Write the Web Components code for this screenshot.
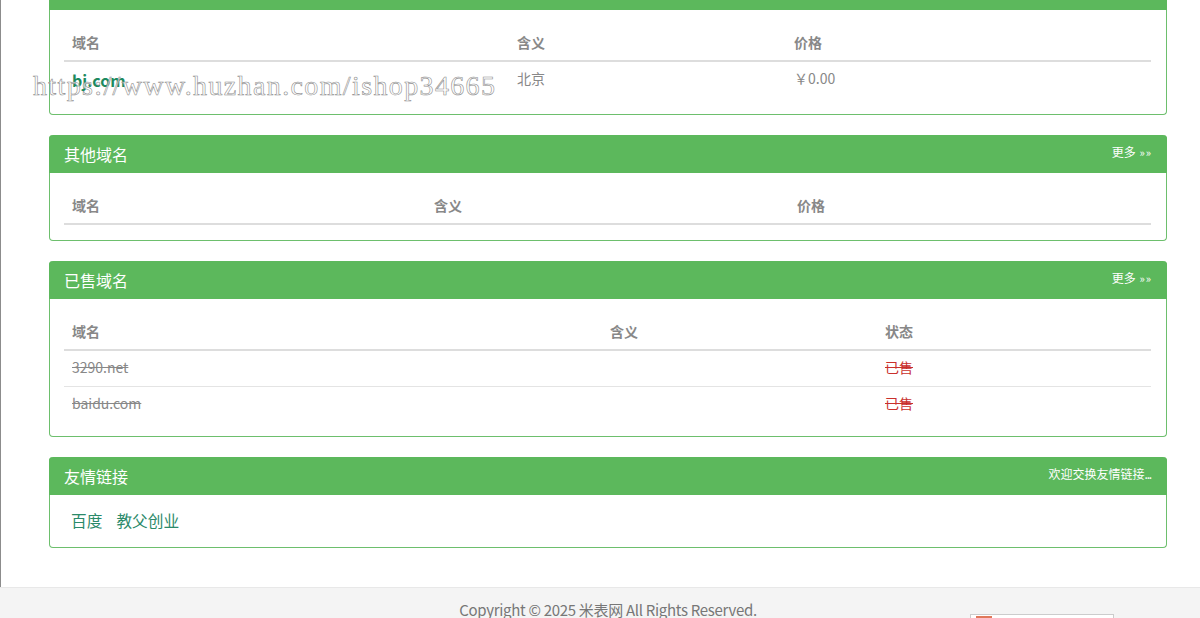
<!DOCTYPE html>
<html lang="zh">
<head>
<meta charset="utf-8">
<title>米表网</title>
<style>
  html, body { margin: 0; height: 618px; overflow: hidden; background: #fff; }
  body { font-family: "Noto Sans CJK SC", "Open Sans", sans-serif; font-size: 14px; color: #888; }
  main { display: block; border-left: 1px solid #8c8c8c; padding: 0 33px 39px 48px; }
</style>
</head>
<body>
<main>
  <domain-panel short>
    <domain-table cols="445px 277px 1fr">
      <domain-row head><domain-cell>域名</domain-cell><domain-cell>含义</domain-cell><domain-cell>价格</domain-cell></domain-row>
      <domain-row><domain-cell kind="link">bj.com</domain-cell><domain-cell>北京</domain-cell><domain-cell>￥0.00</domain-cell></domain-row>
    </domain-table>
  </domain-panel>
  <domain-panel title="其他域名" more="更多 »»">
    <domain-table cols="362px 363px 1fr">
      <domain-row head><domain-cell>域名</domain-cell><domain-cell>含义</domain-cell><domain-cell>价格</domain-cell></domain-row>
    </domain-table>
  </domain-panel>
  <domain-panel title="已售域名" more="更多 »»">
    <domain-table cols="538px 275px 1fr">
      <domain-row head><domain-cell>域名</domain-cell><domain-cell>含义</domain-cell><domain-cell>状态</domain-cell></domain-row>
      <domain-row><domain-cell kind="sold">3290.net</domain-cell><domain-cell></domain-cell><domain-cell kind="red">已售</domain-cell></domain-row>
      <domain-row><domain-cell kind="sold">baidu.com</domain-cell><domain-cell></domain-cell><domain-cell kind="red">已售</domain-cell></domain-row>
    </domain-table>
  </domain-panel>
  <domain-panel title="友情链接" more="欢迎交换友情链接..." last>
    <friend-links><span>百度</span><span>教父创业</span></friend-links>
  </domain-panel>
</main>
<site-footer>Copyright © 2025 米表网 All Rights Reserved.</site-footer>
<water-mark>https://www.huzhan.com/ishop34665</water-mark>

<script>
class DomainPanel extends HTMLElement {
    constructor() {
        super();
        this.attachShadow({ mode: "open" });
        const title = this.getAttribute("title") || "";
        const more = (this.getAttribute("more") || "")
            .replace("»»", '<span class="arrows">»»</span>')
            .replace("...", '<span class="dots">...</span>');
        this.removeAttribute("title");
        this.shadowRoot.innerHTML = `
            <style>
                :host { display: block; margin-bottom: 20px; border: 1px solid #6dbf6d; border-top: 0; border-radius: 4px; background: #fff; }
                :host([last]) { margin-bottom: 0; }
                .head {
                    display: flex; justify-content: space-between; align-items: flex-start;
                    height: 38px; box-sizing: border-box; padding: 7px 15px 0 15px; margin: 0 -1px;
                    background: #5cb85c; color: #fff; border-radius: 4px 4px 0 0;
                }
                :host([short]) .head { height: 10px; padding: 0; border-radius: 0; }
                h3 { margin: 0; font-size: 16px; font-weight: 400; line-height: 24px; }
                a { font-size: 12px; line-height: 18px; margin-top: 1px; }
                .arrows { font-size: 11px; letter-spacing: 1px; margin-left: 1px; }
                .dots { letter-spacing: -1.2px; margin-right: 1px; }
                .body { padding: 15px 15px 15px 14px; }
                :host([short]) .body { padding-bottom: 18px; }
            </style>
            <div class="head"><h3>${title}</h3><a>${more}</a></div>
            <div class="body"><slot></slot></div>
        `;
    }
}

class DomainTable extends HTMLElement {
    constructor() {
        super();
        this.attachShadow({ mode: "open" });
        this.shadowRoot.innerHTML = `
            <style>:host { display: block; }</style>
            <slot></slot>
        `;
        this.style.setProperty("--cols", this.getAttribute("cols"));
    }
}

class DomainRow extends HTMLElement {
    constructor() {
        super();
        this.attachShadow({ mode: "open" });
        this.shadowRoot.innerHTML = `
            <style>
                :host { display: grid; grid-template-columns: var(--cols); height: 36px; box-sizing: border-box; border-bottom: 1px solid #e4e4e4; line-height: 32px; }
                :host(:last-child) { border-bottom: 0; height: 34px; }
                :host([head]), :host([head]:last-child) { height: 37px; border-bottom: 2px solid #ddd; font-weight: 700; line-height: 34px; }
            </style>
            <slot></slot>
        `;
    }
}

class DomainCell extends HTMLElement {
    constructor() {
        super();
        this.attachShadow({ mode: "open" });
        this.shadowRoot.innerHTML = `
            <style>
                :host { display: block; padding: 0 8px; white-space: nowrap; }
                :host([kind="link"]) { color: #1d8a5f; font-weight: 700; font-size: 16px; line-height: 36px; }
                :host([kind="sold"]) { text-decoration: line-through; }
                :host([kind="red"]) { color: #c9302c; text-decoration: line-through; }
            </style>
            <slot></slot>
        `;
    }
}

class FriendLinks extends HTMLElement {
    constructor() {
        super();
        this.attachShadow({ mode: "open" });
        this.shadowRoot.innerHTML = `
            <style>
                :host { display: flex; gap: 14px; padding: 0 7px; margin: -1px 0; font-size: 15.7px; line-height: 24px; color: #2b8a6a; }
            </style>
            <slot></slot>
        `;
    }
}

class SiteFooter extends HTMLElement {
    constructor() {
        super();
        this.attachShadow({ mode: "open" });
        this.shadowRoot.innerHTML = `
            <style>
                :host { display: block; height: 40px; overflow: hidden; border-top: 1px solid #e8e8e8; background: #f4f4f4; color: #777; }
                .wrap { display: grid; margin: 0 33px 0 49px; }
                p { grid-area: 1 / 1; justify-self: center; margin: 12px 0 0; font-size: 15px; letter-spacing: -.3px; line-height: 20px; }
                .badge {
                    grid-area: 1 / 1; justify-self: end; margin: 26px 53px 0 0;
                    width: 144px; height: 30px; box-sizing: border-box; padding: 1px 5px;
                    border: 1px solid #ccc; background: #fff;
                }
                .badge i { display: block; width: 16px; height: 12px; background: #e0785a; }
            </style>
            <div class="wrap">
                <p><slot></slot></p>
                <div class="badge"><i></i></div>
            </div>
        `;
    }
}

class WaterMark extends HTMLElement {
    constructor() {
        super();
        this.attachShadow({ mode: "open" });
        this.shadowRoot.innerHTML = `
            <style>
                :host {
                    position: absolute; left: 33px; top: 70px; white-space: nowrap;
                    font-family: "Liberation Serif", serif; font-size: 28px; letter-spacing: 1.37px; line-height: 32px;
                    color: rgba(255,255,255,.7); -webkit-text-stroke: .6px #8f8f8f;
                }
            </style>
            <slot></slot>
        `;
    }
}

customElements.define("domain-panel", DomainPanel);
customElements.define("domain-table", DomainTable);
customElements.define("domain-row", DomainRow);
customElements.define("domain-cell", DomainCell);
customElements.define("friend-links", FriendLinks);
customElements.define("site-footer", SiteFooter);
customElements.define("water-mark", WaterMark);
</script>
</body>
</html>
